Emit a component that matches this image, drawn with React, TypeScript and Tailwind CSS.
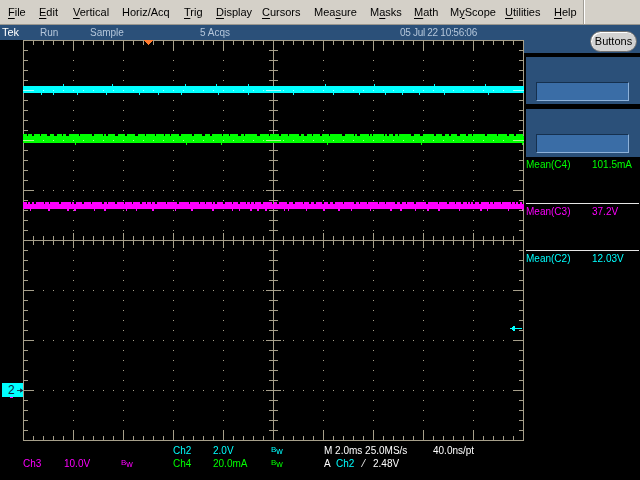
import React from 'react';

const TAN = '#a69f8a';
const X0 = 23;
const X1 = 523;

type R = { x: number; y: number; w: number; h: number };

function lcg(seed: number) {
  let s = seed >>> 0;
  return () => {
    s = (Math.imul(s, 1664525) + 1013904223) >>> 0;
    return s / 4294967296;
  };
}

// alternating on/off runs along the trace edge, gives the noisy look
function runs(seed: number, y: number, h: number, onMin: number, onMax: number, offMin: number, offMax: number, startOn = false): R[] {
  const r = lcg(seed);
  const out: R[] = [];
  let x = X0;
  let on = startOn;
  while (x <= X1) {
    const len = on
      ? onMin + Math.floor(r() * (onMax - onMin + 1))
      : offMin + Math.floor(r() * (offMax - offMin + 1));
    if (on) out.push({ x, y, w: Math.min(len, X1 + 1 - x), h });
    x += len;
    on = !on;
  }
  return out;
}

const traces = [
  {
    color: '#00ffff',
    rects: [
      { x: X0, y: 46, w: 501, h: 7 },
      ...runs(11, 44, 2, 1, 1, 25, 90),
      ...runs(12, 53, 2, 1, 1, 10, 45),
    ],
  },
  {
    color: '#00ff00',
    rects: [
      { x: X0, y: 96, w: 501, h: 7 },
      ...runs(21, 94, 2, 2, 12, 1, 3, true),
      ...runs(22, 103, 2, 1, 1, 30, 120),
    ],
  },
  {
    color: '#ff00ff',
    rects: [
      { x: X0, y: 164, w: 501, h: 5 },
      ...runs(31, 162, 2, 2, 10, 1, 2, true),
      ...runs(32, 169, 2, 1, 2, 3, 22),
    ],
  },
];

// graticule pieces that sit under the traces (vertical strokes)
const under: R[] = [];
// pieces drawn over the traces with lighten blending (horizontal strokes)
const over: R[] = [];

under.push({ x: X0, y: 0, w: 1, h: 401 }, { x: X1, y: 0, w: 1, h: 401 }, { x: 273, y: 0, w: 1, h: 401 });
over.push({ x: X0, y: 0, w: 501, h: 1 }, { x: X0, y: 400, w: 501, h: 1 }, { x: X0, y: 200, w: 501, h: 1 });

for (let i = 1; i < 10; i++) {
  if (i === 5) continue;
  const x = X0 + i * 50;
  for (let k = 1; k < 40; k++) under.push({ x, y: k * 10, w: 1, h: 1 });
}
for (let j = 1; j < 8; j++) {
  if (j === 4) continue;
  const y = j * 50;
  for (let k = 1; k < 50; k++) over.push({ x: X0 + k * 10, y, w: 1, h: 1 });
}
// top / bottom edge ticks and centre horizontal line ticks
for (let k = 1; k < 50; k++) {
  const x = X0 + k * 10;
  const major = k % 5 === 0;
  const len = major ? 10 : 4;
  under.push({ x, y: 1, w: 1, h: len }, { x, y: 400 - len, w: 1, h: len });
  const c = major ? 7 : 4;
  under.push({ x, y: 200 - c, w: 1, h: c * 2 + 1 });
}
// left / right edge ticks and centre vertical line ticks
for (let k = 1; k < 40; k++) {
  const y = k * 10;
  const major = k % 5 === 0;
  const len = major ? 10 : 5;
  over.push({ x: X0, y, w: len, h: 1 }, { x: X1 + 1 - len, y, w: len, h: 1 });
  const c = major ? 7 : 4;
  over.push({ x: 273 - c, y, w: c * 2 + 1, h: 1 });
}

function Rects({ items, fill }: { items: R[]; fill: string }) {
  return (
    <>
      {items.map((r, i) => (
        <rect key={i} x={r.x} y={r.y} width={r.w} height={r.h} fill={fill} />
      ))}
    </>
  );
}

const menu = [
  { label: 'File', u: 0, w: 'w-[31px]' },
  { label: 'Edit', u: 0, w: 'w-[34px]' },
  { label: 'Vertical', u: 0, w: 'w-[49px]' },
  { label: 'Horiz/Acq', u: -1, w: 'w-[62px]' },
  { label: 'Trig', u: 0, w: 'w-[32px]' },
  { label: 'Display', u: 0, w: 'w-[46px]' },
  { label: 'Cursors', u: 0, w: 'w-[52px]' },
  { label: 'Measure', u: 3, w: 'w-[56px]' },
  { label: 'Masks', u: 1, w: 'w-[44px]' },
  { label: 'Math', u: 0, w: 'w-[36px]' },
  { label: 'MyScope', u: 1, w: 'w-[55px]' },
  { label: 'Utilities', u: 0, w: 'w-[49px]' },
  { label: 'Help', u: 0, w: 'w-[29px]' },
];

function MenuBar() {
  return (
    <div className="h-[25px] shrink-0 flex items-stretch bg-[#d4d0c8] border-b border-[#9a978f] text-[11px] text-black">
      <div className="flex items-center pl-[8px]">
        {menu.map((m) => (
          <span key={m.label} className={`${m.w} whitespace-nowrap`}>
            {m.u < 0
              ? m.label
              : (
                <>
                  {m.label.slice(0, m.u)}
                  <span className="underline underline-offset-2">{m.label[m.u]}</span>
                  {m.label.slice(m.u + 1)}
                </>
              )}
          </span>
        ))}
      </div>
      <div className="w-[1px] bg-[#a09d96]" />
      <div className="w-[1px] bg-white" />
    </div>
  );
}

function StatusBar() {
  return (
    <div className="h-[15px] shrink-0 flex items-center bg-[#2b5079] text-[10px] leading-[15px] text-[#b4c6da] whitespace-nowrap">
      <span className="w-[40px] pl-[2px] text-white text-[11px]">Tek</span>
      <span className="w-[50px]">Run</span>
      <span className="w-[110px]">Sample</span>
      <span className="w-[200px]">5 Acqs</span>
      <span className="tracking-[-0.3px]">05 Jul 22 10:56:06</span>
    </div>
  );
}

function Graticule() {
  return (
    <div className="relative h-[401px] w-[524px] shrink-0">
      <svg width="524" height="401" className="block" shapeRendering="crispEdges">
        <Rects items={under} fill={TAN} />
        {traces.map((t, i) => (
          <Rects key={i} items={t.rects} fill={t.color} />
        ))}
        <g className="mix-blend-lighten">
          <Rects items={over} fill={TAN} />
        </g>
        {/* trigger position */}
        <polygon points="143,0 154,0 148.5,5" fill="#ff7a2e" />
        {/* trigger level arrow */}
        <rect x="512" y="288" width="10" height="1" fill="#00ffff" />
        <polygon points="510,288.5 515,285.5 515,291.5" fill="#00ffff" />
        <rect x="10" y="357" width="3" height="1" fill="#ff00ff" />
      </svg>
      <div className="absolute left-[2px] top-[343px] w-[21px] h-[14px] bg-[#00ffff] flex items-center pl-[6px] gap-[2px] text-[12px] leading-[14px] text-[#10203a]">
        <span>2</span>
        <svg width="8" height="7" viewBox="0 0 8 7">
          <rect x="0" y="3" width="5" height="1" fill="#10203a" />
          <polygon points="8,3.5 4,0.5 4,6.5" fill="#10203a" />
        </svg>
      </div>
    </div>
  );
}

function Bw({ color }: { color: string }) {
  return (
    <span className={`${color} whitespace-nowrap`}>
      <span className="relative -top-[2px] text-[8px]">B</span>
      <span className="text-[9px]">w</span>
    </span>
  );
}

function Readouts() {
  return (
    <div className="flex-1 pt-[4px] text-[10px] leading-[12px] whitespace-nowrap">
      <div className="flex">
        <span className="w-[173px]" />
        <span className="w-[40px] text-[#00ffff]">Ch2</span>
        <span className="w-[58px] text-[#00ffff]">2.0V</span>
        <span className="w-[53px]"><Bw color="text-[#00ffff]" /></span>
        <span className="w-[109px] text-white">M 2.0ms 25.0MS/s</span>
        <span className="text-white">40.0ns/pt</span>
      </div>
      <div className="flex">
        <span className="w-[23px]" />
        <span className="w-[41px] text-[#ff00ff]">Ch3</span>
        <span className="w-[57px] text-[#ff00ff]">10.0V</span>
        <span className="w-[52px]"><Bw color="text-[#ff00ff]" /></span>
        <span className="w-[40px] text-[#00ff00]">Ch4</span>
        <span className="w-[58px] text-[#00ff00]">20.0mA</span>
        <span className="w-[53px]"><Bw color="text-[#00ff00]" /></span>
        <span className="w-[12px] text-white">A</span>
        <span className="w-[27px] text-[#00ffff]">Ch2</span>
        <span className="w-[10px] text-white">⁄</span>
        <span className="text-white">2.48V</span>
      </div>
    </div>
  );
}

function EmptyPanel({ h }: { h: string }) {
  return (
    <div className={`${h} bg-[#2b5079] pl-[10px] pt-[25px]`}>
      <div className="w-[93px] h-[19px] bg-[#3a6da6] border-t border-l border-[#15304e] border-b border-r border-b-[#8db1d9] border-r-[#8db1d9]" />
    </div>
  );
}

const measures = [
  { label: 'Mean(C4)', value: '101.5mA', color: 'text-[#00ff00]', line: true },
  { label: 'Mean(C3)', value: '37.2V', color: 'text-[#ff00ff]', line: true },
  { label: 'Mean(C2)', value: '12.03V', color: 'text-[#00ffff]', line: false },
];

function SidePanel() {
  return (
    <div className="w-[116px] flex flex-col">
      <div className="h-[28px] bg-[#2b5079] flex justify-end pt-[6px] pr-[3px]">
        <div className="w-[47px] h-[21px] rounded-full bg-[#d2d2d2] border border-[#6e6e6e] shadow-[inset_1px_1px_0_#ffffff] flex items-center justify-center text-[11px] text-black">
          Buttons
        </div>
      </div>
      <div className="ml-[2px] flex flex-col">
        <div className="mt-[4px]">
          <EmptyPanel h="h-[47px]" />
        </div>
        <div className="mt-[5px]">
          <EmptyPanel h="h-[48px]" />
        </div>
        {measures.map((m) => (
          <div
            key={m.label}
            className={`h-[47px] mr-[1px] pt-[2px] flex text-[10px] leading-[12px] ${m.color} ${m.line ? 'border-b border-[#e6e6e6]' : ''}`}
          >
            <span className="w-[66px]">{m.label}</span>
            <span>{m.value}</span>
          </div>
        ))}
      </div>
    </div>
  );
}

export default function App() {
  return (
    <div className="w-[640px] h-[480px] bg-black overflow-hidden flex flex-col font-['Liberation_Sans',Arial,sans-serif]">
      <MenuBar />
      <div className="flex flex-1">
        <div className="w-[524px] flex flex-col">
          <StatusBar />
          <Graticule />
          <Readouts />
        </div>
        <SidePanel />
      </div>
    </div>
  );
}
